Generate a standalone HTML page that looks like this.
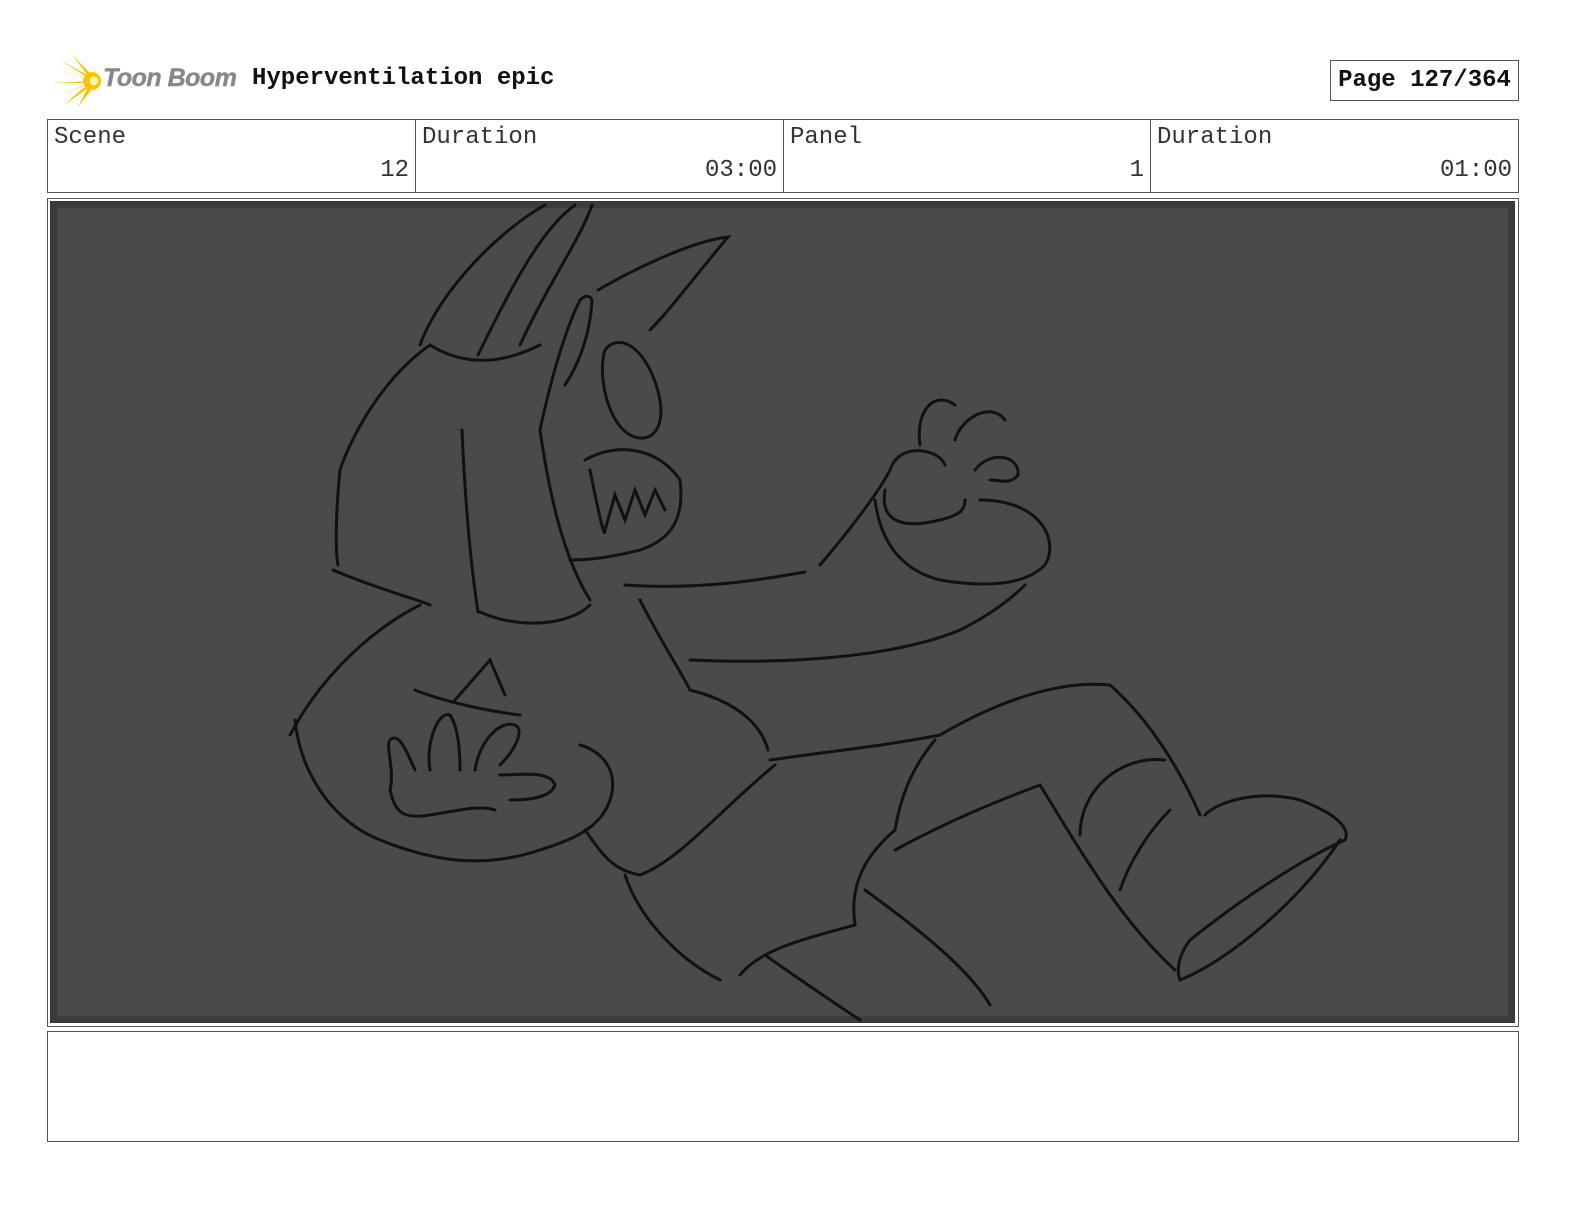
<!DOCTYPE html>
<html><head><meta charset="utf-8"><style>
body{margin:0;background:#fff;width:1584px;height:1224px;position:relative;overflow:hidden;font-family:"Liberation Mono",monospace}
.abs{position:absolute}
.cell{position:absolute;top:119px;height:74px;border:1px solid #555;box-sizing:border-box;color:#333;font-size:24px}
.cell .l{position:absolute;left:6px;top:4px}
.cell .v{position:absolute;right:6px;top:37px}
</style></head><body>
<svg class="abs" style="left:50px;top:55px" width="52" height="52" viewBox="0 0 52 52">
<g fill="#f5c400">
<polygon points="48,26 2,14 30,21"/><polygon points="48,26 8,4 32,19"/><polygon points="48,26 22,0 36,18"/>
<polygon points="48,26 0,28 30,28"/><polygon points="48,26 4,42 30,32"/><polygon points="48,26 14,50 32,34"/><polygon points="48,26 28,52 37,34"/>
<circle cx="42" cy="26" r="9"/></g><circle cx="44" cy="26" r="4.5" fill="#fff3b0"/></svg>
<div class="abs" style="left:103px;top:64px;font-family:'Liberation Sans',sans-serif;font-style:italic;font-weight:600;font-size:25px;color:#888;letter-spacing:-0.5px;-webkit-text-stroke:0.4px #888">Toon Boom</div>
<div class="abs" style="left:252px;top:65px;font-weight:bold;font-size:24px;color:#111">Hyperventilation epic</div>
<div class="abs" style="left:1330px;top:60px;width:189px;height:41px;border:1px solid #555;box-sizing:border-box;font-weight:bold;font-size:24px;color:#111;text-align:center;line-height:39px">Page 127/364</div>
<div class="cell" style="left:47px;width:369px"><span class="l">Scene</span><span class="v">12</span></div>
<div class="cell" style="left:415px;width:369px"><span class="l">Duration</span><span class="v">03:00</span></div>
<div class="cell" style="left:783px;width:368px"><span class="l">Panel</span><span class="v">1</span></div>
<div class="cell" style="left:1150px;width:369px"><span class="l">Duration</span><span class="v">01:00</span></div>
<div class="abs" style="left:47px;top:198px;width:1472px;height:829px;border:1px solid #555;box-sizing:border-box"></div>
<div class="abs" style="left:51px;top:202px;width:1463px;height:820px;background:#4a4a4a;border:6px solid #3c3c3c;box-sizing:border-box;outline:1px solid #333"></div>
<svg class="abs" style="left:51px;top:202px" width="1463" height="820" viewBox="51 202 1463 820" fill="none" stroke="#111" stroke-width="3" stroke-linecap="round">
<path d="M420,345 C440,290 500,230 545,205"/><path d="M478,355 C510,290 540,230 575,205"/><path d="M520,345 C550,280 580,240 592,205"/>
<path d="M598,290 C650,260 700,240 728,237 C700,270 670,310 650,330"/>
<path d="M540,430 C555,360 570,320 580,300 C585,295 590,295 592,300 C590,340 575,370 565,385"/>
<path d="M430,345 C470,370 510,360 540,345 M430,345 C380,380 350,440 340,470 C336,510 335,550 338,565"/>
<path d="M605,350 C620,330 650,350 660,400 C665,430 650,445 630,435 C605,420 598,370 605,350"/>
<path d="M585,460 C620,440 660,450 680,480 C685,520 670,540 640,550 C600,560 580,560 570,560"/>
<path d="M590,470 C600,520 605,540 605,530 L615,495 L625,520 L635,490 L645,515 L655,490 L665,510"/>
<path d="M462,430 C465,500 470,560 478,612 M540,430 C550,500 565,560 590,600"/>
<path d="M333,570 C380,590 420,600 430,605 M420,605 C390,620 330,660 290,735"/>
<path d="M480,612 C520,630 570,625 590,605"/>
<path d="M625,585 C700,590 760,580 805,572 M820,565 C850,530 880,490 890,470"/>
<path d="M890,470 C900,440 940,450 945,465 M885,490 C880,520 900,530 940,520 C960,515 965,510 965,500"/>
<path d="M920,445 C915,410 935,390 955,405 M955,440 C960,420 990,400 1005,420 M975,470 C990,450 1020,455 1018,475 C1010,485 1000,480 990,480"/>
<path d="M980,500 C1040,500 1060,540 1045,565 C1020,590 970,585 940,580 C900,570 880,540 875,500"/>
<path d="M690,660 C800,665 900,655 960,630 C1000,610 1020,590 1025,585"/>
<path d="M640,600 C660,640 680,670 690,690 M690,690 C730,700 760,720 768,750"/>
<path d="M295,720 C300,770 330,820 380,840 C430,860 480,870 540,850 C570,840 600,830 610,800 C620,770 600,750 580,745"/>
<path d="M390,790 C395,770 385,745 390,740 C400,730 410,760 415,770 M430,770 C425,740 440,710 450,715 C460,730 460,760 460,770 M475,770 C480,740 500,720 515,725 C525,730 515,750 500,765 M500,775 C520,775 550,770 555,785 C550,800 520,800 510,800"/>
<path d="M390,790 C395,810 400,820 430,815 C460,810 480,805 495,810"/>
<path d="M415,690 C440,700 480,710 520,715 M455,700 L490,660 L505,695"/>
<path d="M770,760 C840,750 890,745 940,735 C1000,700 1060,680 1110,685 C1150,720 1180,770 1200,815"/>
<path d="M585,830 C600,850 610,870 640,875 C680,860 720,810 775,765"/>
<path d="M625,875 C640,920 680,960 720,980"/>
<path d="M935,740 C910,770 900,800 895,830 C860,860 850,890 855,925 M895,850 C950,820 1000,800 1040,785 C1080,850 1120,920 1175,970"/>
<path d="M855,925 C800,940 760,950 740,975 M765,955 C800,980 830,1000 860,1020"/>
<path d="M865,890 C920,930 970,970 990,1005"/>
<path d="M1080,835 C1080,790 1120,755 1165,760 M1120,890 C1130,860 1150,830 1170,810"/>
<path d="M1205,815 C1220,800 1260,790 1300,800 C1340,815 1350,830 1345,840 C1300,860 1240,900 1190,940 C1175,960 1178,975 1180,980 C1230,960 1300,900 1340,840"/>
</svg>
<div class="abs" style="left:47px;top:1031px;width:1472px;height:111px;border:1px solid #555;box-sizing:border-box"></div>
</body></html>
